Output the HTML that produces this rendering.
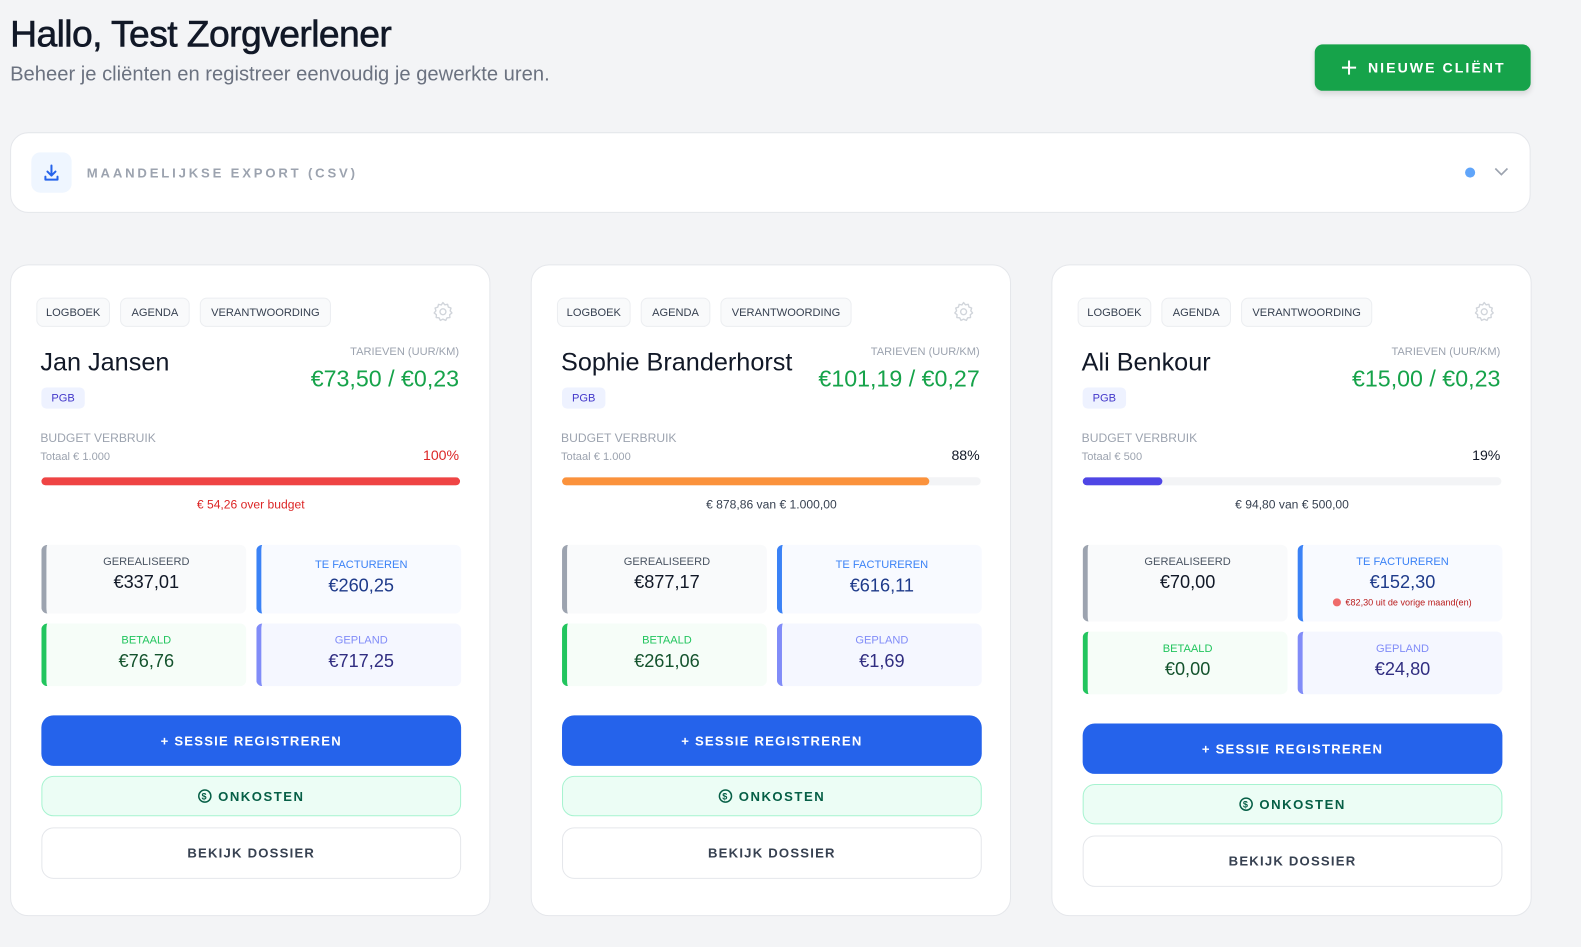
<!DOCTYPE html>
<html><head><meta charset="utf-8"><style>
*{box-sizing:border-box;margin:0;padding:0}
html,body{width:1581px;height:947px;overflow:hidden}
body{background:#f3f4f6;font-family:"Liberation Sans",sans-serif;position:relative;color:#111827}
#w{position:absolute;left:0;top:0;width:1581px;height:947px;transform:scale(1.009);transform-origin:0 0}
.abs{position:absolute}
h1{position:absolute;left:10px;top:13px;font-size:37px;font-weight:400;letter-spacing:-0.6px;color:#111827;-webkit-text-stroke:0.6px #111827}
.sub{left:10px;top:63px;font-size:20px;color:#6b7280}
.newbtn{left:1303px;top:44px;width:214px;height:46px;background:#16a34a;border-radius:8px;color:#fff;font-weight:700;font-size:14px;letter-spacing:2px;display:flex;align-items:center;justify-content:center;gap:10px;box-shadow:0 3px 6px rgba(0,0,0,.12)}
.export{left:10px;top:131px;width:1507px;height:80px;background:#fff;border-radius:18px;border:1px solid #e5e7eb}
.card{top:262px;width:476px;height:646px;background:#fff;border:1px solid #e5e7eb;border-radius:18px}
.tab{position:absolute;top:32px;height:29px;border:1px solid #eceef1;background:#f9fafb;border-radius:7px;font-size:11px;color:#374151;display:flex;align-items:center;justify-content:center}
.name{position:absolute;left:29px;top:82px;font-size:25px;color:#111827}
.pgb{position:absolute;left:30px;top:121px;width:43px;height:21px;background:#eef2ff;color:#4338ca;border-radius:5px;font-size:11px;display:flex;align-items:center;justify-content:center}
.tl{position:absolute;right:30px;top:80px;font-size:11px;color:#9ca3af}
.price{position:absolute;right:30px;top:99px;font-size:23px;color:#16a34a}
.bv{position:absolute;left:29px;top:164px;font-size:12px;color:#9ca3af}
.tot{position:absolute;left:29px;top:184px;font-size:11px;color:#9ca3af}
.pct{position:absolute;right:30px;top:180px;font-size:14px}
.bar{position:absolute;left:30px;top:210px;width:415px;height:8px;background:#f3f4f6;border-radius:4px;overflow:hidden}
.bar div{height:100%;border-radius:4px}
.bt{position:absolute;left:30px;width:415px;top:230px;text-align:center;font-size:12px;color:#374151}
.lower{position:absolute;left:30px;top:277px;width:416px}
.grid{display:grid;grid-template-columns:203px 203px;gap:10px}
.st{border-radius:6px;border-left:5px solid;text-align:center;padding-top:11px}
.st .l{font-size:11px}
.st .v{font-size:18px;margin-top:4px}
.b1{margin-top:29px;height:50px;background:#2563eb;border-radius:12px;color:#fff;font-weight:700;font-size:13px;letter-spacing:1.2px;display:flex;align-items:center;justify-content:center}
.b2{margin-top:10px;height:40px;background:#ecfdf5;border:1px solid #a7f3d0;border-radius:12px;color:#065f46;font-weight:700;font-size:13px;letter-spacing:1.5px;display:flex;align-items:center;justify-content:center;gap:6px}
.b3{margin-top:11px;height:51px;border:1px solid #e5e7eb;border-radius:12px;color:#374151;font-weight:700;font-size:13px;letter-spacing:1.2px;display:flex;align-items:center;justify-content:center}
</style></head><body><div id="w">
<h1>Hallo, Test Zorgverlener</h1>
<div class="abs sub">Beheer je cliënten en registreer eenvoudig je gewerkte uren.</div>
<div class="abs newbtn"><svg width="18" height="18" viewBox="0 0 18 18"><path d="M9 2v14M2 9h14" stroke="#fff" stroke-width="2"/></svg>NIEUWE CLIËNT</div>
<div class="abs export">
 <div class="abs" style="left:20px;top:19px;width:40px;height:40px;background:#eff6ff;border-radius:9px"><svg width="40" height="40" viewBox="0 0 40 40"><path d="M20 13v10M16 19l4 4 4-4M14 24v3h12v-3" fill="none" stroke="#2563eb" stroke-width="2" stroke-linecap="round" stroke-linejoin="round"/></svg></div>
 <div class="abs" style="left:75px;top:32px;font-size:13px;letter-spacing:2.8px;color:#9ca3af;font-weight:700">MAANDELIJKSE EXPORT (CSV)</div>
 <div class="abs" style="left:1441px;top:34px;width:10px;height:10px;border-radius:50%;background:#60a5fa"></div>
 <svg class="abs" style="left:1469px;top:32px" width="16" height="12" viewBox="0 0 16 12"><path d="M2 3l6 6 6-6" fill="none" stroke="#9ca3af" stroke-width="1.6"/></svg>
</div>

<div class="abs card" style="left:10px">
 <div class="tab" style="left:25px;width:73px">LOGBOEK</div><div class="tab" style="left:108px;width:69px">AGENDA</div><div class="tab" style="left:187px;width:130px">VERANTWOORDING</div>
 <svg class="abs" style="left:417px;top:35px" width="22" height="22" viewBox="0 0 24 24"><path d="M12 2l2 2.5 3-.6.8 3 2.9 1-.9 3 1.9 2.4-2.4 1.8.2 3.1-3.1.3-1.4 2.8L12 20l-2.8 1.3-1.4-2.8-3.1-.3.2-3.1L2.5 13.3 4.4 11l-.9-3 2.9-1 .8-3 3 .6z" fill="none" stroke="#d1d5db" stroke-width="1.5" stroke-linejoin="round"/><circle cx="12" cy="12" r="3.2" fill="none" stroke="#d1d5db" stroke-width="1.5"/></svg>
 <div class="name">Jan Jansen</div><div class="pgb">PGB</div>
 <div class="tl">TARIEVEN (UUR/KM)</div><div class="price">€73,50 / €0,23</div>
 <div class="bv">BUDGET VERBRUIK</div><div class="tot">Totaal € 1.000</div><div class="pct" style="color:#dc2626">100%</div>
 <div class="bar"><div style="width:100%;background:#ef4444"></div></div>
 <div class="bt" style="color:#dc2626">€ 54,26 over budget</div>
 <div class="lower">
  <div class="grid">
   <div class="st" style="height:68px;background:#f9fafb;border-color:#9ca3af"><div class="l" style="color:#4b5563">GEREALISEERD</div><div class="v">€337,01</div></div>
   <div class="st" style="height:68px;background:#f8faff;border-color:#3b82f6;padding-top:14px"><div class="l" style="color:#3b82f6">TE FACTUREREN</div><div class="v" style="color:#1e3a8a">€260,25</div></div>
   <div class="st" style="height:62px;background:#f6fdf8;border-color:#22c55e"><div class="l" style="color:#22c55e">BETAALD</div><div class="v" style="color:#14532d">€76,76</div></div>
   <div class="st" style="height:62px;background:#f5f7ff;border-color:#818cf8"><div class="l" style="color:#818cf8">GEPLAND</div><div class="v" style="color:#312e81">€717,25</div></div>
  </div>
  <div class="b1">+ SESSIE REGISTREREN</div>
  <div class="b2"><svg width="14" height="14" viewBox="0 0 14 14"><circle cx="7" cy="7" r="6" fill="none" stroke="#065f46" stroke-width="1.5"/><text x="7" y="10.5" font-size="9" text-anchor="middle" fill="#065f46" font-family="Liberation Sans" font-weight="700">$</text></svg>ONKOSTEN</div>
  <div class="b3">BEKIJK DOSSIER</div>
 </div>
</div>

<div class="abs card" style="left:526px">
 <div class="tab" style="left:25px;width:73px">LOGBOEK</div><div class="tab" style="left:108px;width:69px">AGENDA</div><div class="tab" style="left:187px;width:130px">VERANTWOORDING</div>
 <svg class="abs" style="left:417px;top:35px" width="22" height="22" viewBox="0 0 24 24"><path d="M12 2l2 2.5 3-.6.8 3 2.9 1-.9 3 1.9 2.4-2.4 1.8.2 3.1-3.1.3-1.4 2.8L12 20l-2.8 1.3-1.4-2.8-3.1-.3.2-3.1L2.5 13.3 4.4 11l-.9-3 2.9-1 .8-3 3 .6z" fill="none" stroke="#d1d5db" stroke-width="1.5" stroke-linejoin="round"/><circle cx="12" cy="12" r="3.2" fill="none" stroke="#d1d5db" stroke-width="1.5"/></svg>
 <div class="name">Sophie Branderhorst</div><div class="pgb">PGB</div>
 <div class="tl">TARIEVEN (UUR/KM)</div><div class="price">€101,19 / €0,27</div>
 <div class="bv">BUDGET VERBRUIK</div><div class="tot">Totaal € 1.000</div><div class="pct">88%</div>
 <div class="bar"><div style="width:87.8%;background:#fb923c"></div></div>
 <div class="bt">€ 878,86 van € 1.000,00</div>
 <div class="lower">
  <div class="grid">
   <div class="st" style="height:68px;background:#f9fafb;border-color:#9ca3af"><div class="l" style="color:#4b5563">GEREALISEERD</div><div class="v">€877,17</div></div>
   <div class="st" style="height:68px;background:#f8faff;border-color:#3b82f6;padding-top:14px"><div class="l" style="color:#3b82f6">TE FACTUREREN</div><div class="v" style="color:#1e3a8a">€616,11</div></div>
   <div class="st" style="height:62px;background:#f6fdf8;border-color:#22c55e"><div class="l" style="color:#22c55e">BETAALD</div><div class="v" style="color:#14532d">€261,06</div></div>
   <div class="st" style="height:62px;background:#f5f7ff;border-color:#818cf8"><div class="l" style="color:#818cf8">GEPLAND</div><div class="v" style="color:#312e81">€1,69</div></div>
  </div>
  <div class="b1">+ SESSIE REGISTREREN</div>
  <div class="b2"><svg width="14" height="14" viewBox="0 0 14 14"><circle cx="7" cy="7" r="6" fill="none" stroke="#065f46" stroke-width="1.5"/><text x="7" y="10.5" font-size="9" text-anchor="middle" fill="#065f46" font-family="Liberation Sans" font-weight="700">$</text></svg>ONKOSTEN</div>
  <div class="b3">BEKIJK DOSSIER</div>
 </div>
</div>

<div class="abs card" style="left:1042px">
 <div class="tab" style="left:25px;width:73px">LOGBOEK</div><div class="tab" style="left:108px;width:69px">AGENDA</div><div class="tab" style="left:187px;width:130px">VERANTWOORDING</div>
 <svg class="abs" style="left:417px;top:35px" width="22" height="22" viewBox="0 0 24 24"><path d="M12 2l2 2.5 3-.6.8 3 2.9 1-.9 3 1.9 2.4-2.4 1.8.2 3.1-3.1.3-1.4 2.8L12 20l-2.8 1.3-1.4-2.8-3.1-.3.2-3.1L2.5 13.3 4.4 11l-.9-3 2.9-1 .8-3 3 .6z" fill="none" stroke="#d1d5db" stroke-width="1.5" stroke-linejoin="round"/><circle cx="12" cy="12" r="3.2" fill="none" stroke="#d1d5db" stroke-width="1.5"/></svg>
 <div class="name">Ali Benkour</div><div class="pgb">PGB</div>
 <div class="tl">TARIEVEN (UUR/KM)</div><div class="price">€15,00 / €0,23</div>
 <div class="bv">BUDGET VERBRUIK</div><div class="tot">Totaal € 500</div><div class="pct">19%</div>
 <div class="bar"><div style="width:19%;background:#4f46e5"></div></div>
 <div class="bt">€ 94,80 van € 500,00</div>
 <div class="lower">
  <div class="grid">
   <div class="st" style="height:76px;background:#f9fafb;border-color:#9ca3af"><div class="l" style="color:#4b5563">GEREALISEERD</div><div class="v">€70,00</div></div>
   <div class="st" style="height:76px;background:#f8faff;border-color:#3b82f6"><div class="l" style="color:#3b82f6">TE FACTUREREN</div><div class="v" style="color:#1e3a8a">€152,30</div><div style="font-size:9px;color:#b91c1c;margin-top:4px"><span style="display:inline-block;width:8px;height:8px;border-radius:50%;background:#ef6b6b;vertical-align:-1px;margin-right:4px"></span>€82,30 uit de vorige maand(en)</div></div>
   <div class="st" style="height:62px;background:#f6fdf8;border-color:#22c55e"><div class="l" style="color:#22c55e">BETAALD</div><div class="v" style="color:#14532d">€0,00</div></div>
   <div class="st" style="height:62px;background:#f5f7ff;border-color:#818cf8"><div class="l" style="color:#818cf8">GEPLAND</div><div class="v" style="color:#312e81">€24,80</div></div>
  </div>
  <div class="b1">+ SESSIE REGISTREREN</div>
  <div class="b2"><svg width="14" height="14" viewBox="0 0 14 14"><circle cx="7" cy="7" r="6" fill="none" stroke="#065f46" stroke-width="1.5"/><text x="7" y="10.5" font-size="9" text-anchor="middle" fill="#065f46" font-family="Liberation Sans" font-weight="700">$</text></svg>ONKOSTEN</div>
  <div class="b3">BEKIJK DOSSIER</div>
 </div>
</div>
</div></body></html>
